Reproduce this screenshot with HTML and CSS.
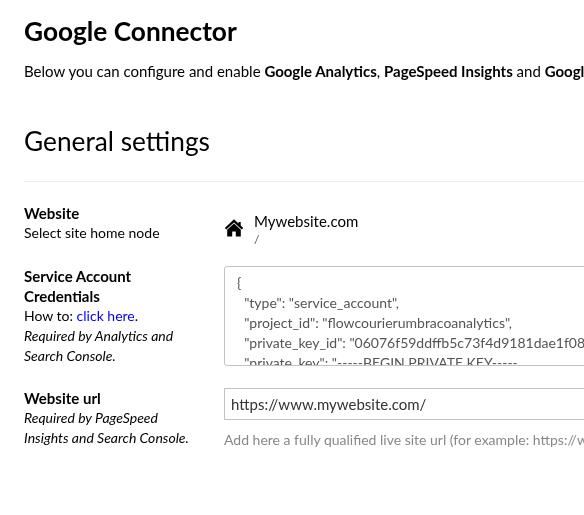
FILE: index.html
```html
<!DOCTYPE html>
<html lang="en">
<head>
<meta charset="utf-8">
<title>Google Connector</title>
<link rel="stylesheet" href="styles.css">
</head>
<body>
<main class="panel">
  <h1 class="title">Google Connector</h1>
  <p class="intro">Below you can configure and enable <b>Google Analytics</b>, <b>PageSpeed Insights</b> and <b>Google Search Console</b>.</p>
  <h2 class="section">General settings</h2>
  <div class="row website">
    <div class="label"><b>Website</b><span>Select site home node</span></div>
    <div class="node">
      <svg class="home" viewBox="0 0 20 18" width="20" height="18"><path d="M10 .3 .8 8.9l1.5 1.6L10 3.5l7.7 7 1.5-1.6-2.5-2.4V3.1h-2.2v1.4z"/><path d="M10 4.5 3.2 10.8v6.6h5v-4.9h3.6v4.9h5v-6.6z"/></svg>
      <div class="node-text"><span class="node-name">Mywebsite.com</span><span class="node-path">/</span></div>
    </div>
  </div>
  <div class="row credentials">
    <div class="label"><b>Service Account Credentials</b><span>How to: <a href="#">click here</a>.</span><i>Required by Analytics and Search Console.</i></div>
    <div class="code">{
  "type": "service_account",
  "project_id": "flowcourierumbracoanalytics",
  "private_key_id": "06076f59ddffb5c73f4d9181dae1f08",
  "private_key": "-----BEGIN PRIVATE KEY-----</div>
  </div>
  <div class="row">
    <div class="label"><b>Website url</b><i>Required by PageSpeed Insights and Search Console.</i></div>
    <div class="field"><div class="input">https://www.mywebsite.com/</div><div class="help">Add here a fully qualified live site url (for example: https://www.mywebsite.com/)</div></div>
  </div>
</main>
</body>
</html>
```
FILE: styles.css
```css
* { box-sizing: border-box; }
body { margin: 0; background: #fff; color: #000; font: 14px/20px Lato, sans-serif; overflow: hidden; }
.panel { width: 100%; height: 100vh; padding: 11px 0 0 24px; overflow: hidden; will-change: transform; }
.title { margin: 0; font-size: 26.25px; line-height: 40px; font-weight: 700; }
.intro { margin: 10px 0 0; font-size: 15px; line-height: 20px; white-space: nowrap; }
.section { margin: 40px 0 21px; padding-bottom: 20px; border-bottom: 1px solid #eee; font-size: 26.25px; line-height: 40px; font-weight: 400; }
.row { display: flex; }
.label { width: 170px; margin-right: 30px; flex: none; }
.label b, .label span, .label i { display: block; }
.label b { font-size: 15px; }
.label a { color: #00f; text-decoration: none; }
.website { height: 63px; }
.node { display: flex; padding-top: 8px; gap: 10px; }
.home { margin-top: 8px; }
.node-text span { display: block; }
.node-name { font-size: 15px; }
.node-path { font-size: 12px; line-height: 18px; color: #555; }
.credentials { height: 122px; }
.code { flex: none; width: 600px; height: 100px; padding: 6px 12px; border: 1px solid #c2c2c2; border-radius: 3px; color: #555; white-space: pre; overflow: hidden; }
.field { min-width: 0; }
.input { width: 600px; height: 32px; padding: 5px 6px; border: 1px solid #c2c2c2; font-size: 15px; color: #333; }
.help { margin-top: 10px; color: #888; white-space: nowrap; }
```
